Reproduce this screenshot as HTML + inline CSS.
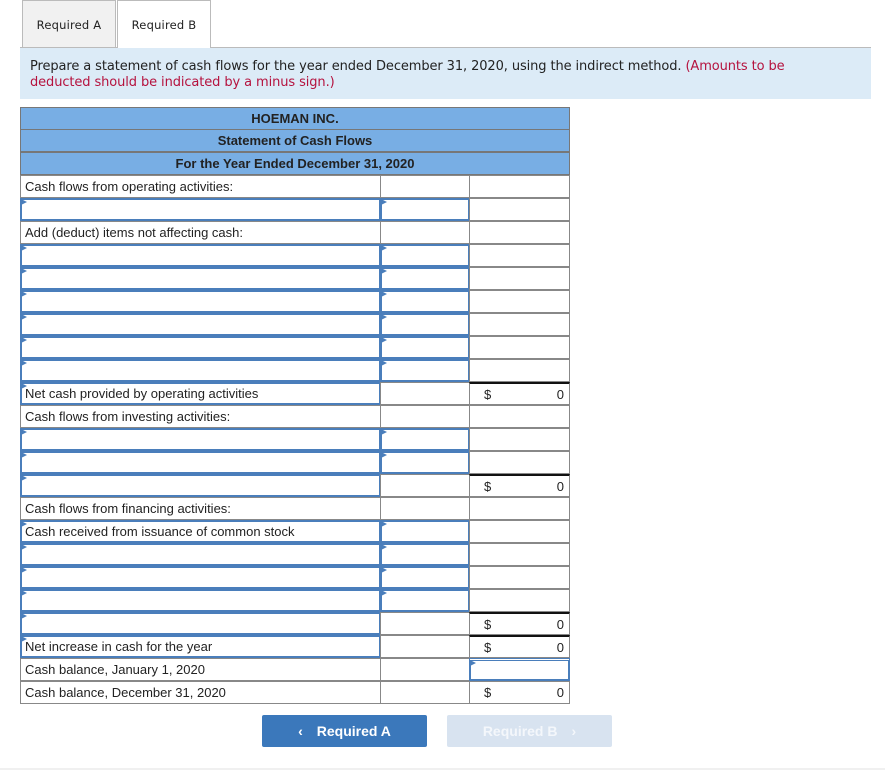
<!DOCTYPE html>
<html><head><style>
body{margin:0;width:885px;height:777px;background:#fff;position:relative;font-family:"Liberation Sans",Arial,sans-serif;overflow:hidden}
.tab{position:absolute;top:0;height:46px;width:92px;border:1px solid #bbb;border-bottom:none;font-family:"DejaVu Sans",Verdana,sans-serif;font-size:11.5px;line-height:48px;text-align:center;color:#222;letter-spacing:0.2px}
.banner{position:absolute;left:20px;top:47px;width:851px;height:52px;background:#dcebf7;border-top:1px solid #bbb;box-sizing:border-box;font-family:"DejaVu Sans",Verdana,sans-serif;font-size:13px;color:#222;padding:11px 60px 0 10px;line-height:16px;letter-spacing:-0.1px}
.red{color:#b5123e}
.hdr{position:absolute;left:20px;width:550px;height:23px;background:#78aee4;border:1px solid #777;box-sizing:border-box;text-align:center;font-size:13px;line-height:21px;font-weight:bold;color:#222}
.c{position:absolute;height:23px;box-sizing:border-box;border:1px solid #888;font-size:13px;line-height:21px;color:#222;padding-left:4px;white-space:nowrap}
.in{border:2px solid #4a7ebb;line-height:19px;padding-left:3px}
.in::before{content:"";position:absolute;left:-1px;top:-1px;border-left:6px solid #4a7ebb;border-top:3px solid transparent;border-bottom:3px solid transparent}
.t{border-top:2px solid #111}
.d{position:absolute;left:14px}
.z{position:absolute;right:5px}
.btn{position:absolute;top:715px;width:165px;height:32px;border-radius:2px;color:#fff;font-weight:bold;font-size:14px;line-height:32px;text-align:center}
</style></head><body>
<div class="tab" style="left:22px;background:#f1f1f1">Required A</div>
<div class="tab" style="left:117px;background:#fff;z-index:2;height:47px">Required B</div>
<div class="banner">Prepare a statement of cash flows for the year ended December 31, 2020, using the indirect method. <span class="red">(Amounts to be deducted should be indicated by a minus sign.)</span></div>
<div class="hdr" style="top:107px">HOEMAN INC.</div>
<div class="hdr" style="top:129px">Statement of Cash Flows</div>
<div class="hdr" style="top:152px">For the Year Ended December 31, 2020</div>

<div style="position:absolute;left:0;top:0">
<div class="c" style="left:20px;top:175px;width:361px">Cash flows from operating activities:</div><div class="c" style="left:380px;top:175px;width:90px"></div><div class="c" style="left:469px;top:175px;width:101px"></div>
<div class="c in" style="left:20px;top:198px;width:361px"></div><div class="c in" style="left:380px;top:198px;width:90px"></div><div class="c" style="left:469px;top:198px;width:101px"></div>
<div class="c" style="left:20px;top:221px;width:361px">Add (deduct) items not affecting cash:</div><div class="c" style="left:380px;top:221px;width:90px"></div><div class="c" style="left:469px;top:221px;width:101px"></div>
<div class="c in" style="left:20px;top:244px;width:361px"></div><div class="c in" style="left:380px;top:244px;width:90px"></div><div class="c" style="left:469px;top:244px;width:101px"></div>
<div class="c in" style="left:20px;top:267px;width:361px"></div><div class="c in" style="left:380px;top:267px;width:90px"></div><div class="c" style="left:469px;top:267px;width:101px"></div>
<div class="c in" style="left:20px;top:290px;width:361px"></div><div class="c in" style="left:380px;top:290px;width:90px"></div><div class="c" style="left:469px;top:290px;width:101px"></div>
<div class="c in" style="left:20px;top:313px;width:361px"></div><div class="c in" style="left:380px;top:313px;width:90px"></div><div class="c" style="left:469px;top:313px;width:101px"></div>
<div class="c in" style="left:20px;top:336px;width:361px"></div><div class="c in" style="left:380px;top:336px;width:90px"></div><div class="c" style="left:469px;top:336px;width:101px"></div>
<div class="c in" style="left:20px;top:359px;width:361px"></div><div class="c in" style="left:380px;top:359px;width:90px"></div><div class="c" style="left:469px;top:359px;width:101px"></div>
<div class="c in" style="left:20px;top:382px;width:361px">Net cash provided by operating activities</div><div class="c" style="left:380px;top:382px;width:90px"></div><div class="c t" style="left:469px;top:382px;width:101px"><span class="d">$</span><span class="z">0</span></div>
<div class="c" style="left:20px;top:405px;width:361px">Cash flows from investing activities:</div><div class="c" style="left:380px;top:405px;width:90px"></div><div class="c" style="left:469px;top:405px;width:101px"></div>
<div class="c in" style="left:20px;top:428px;width:361px"></div><div class="c in" style="left:380px;top:428px;width:90px"></div><div class="c" style="left:469px;top:428px;width:101px"></div>
<div class="c in" style="left:20px;top:451px;width:361px"></div><div class="c in" style="left:380px;top:451px;width:90px"></div><div class="c" style="left:469px;top:451px;width:101px"></div>
<div class="c in" style="left:20px;top:474px;width:361px"></div><div class="c" style="left:380px;top:474px;width:90px"></div><div class="c t" style="left:469px;top:474px;width:101px"><span class="d">$</span><span class="z">0</span></div>
<div class="c" style="left:20px;top:497px;width:361px">Cash flows from financing activities:</div><div class="c" style="left:380px;top:497px;width:90px"></div><div class="c" style="left:469px;top:497px;width:101px"></div>
<div class="c in" style="left:20px;top:520px;width:361px">Cash received from issuance of common stock</div><div class="c in" style="left:380px;top:520px;width:90px"></div><div class="c" style="left:469px;top:520px;width:101px"></div>
<div class="c in" style="left:20px;top:543px;width:361px"></div><div class="c in" style="left:380px;top:543px;width:90px"></div><div class="c" style="left:469px;top:543px;width:101px"></div>
<div class="c in" style="left:20px;top:566px;width:361px"></div><div class="c in" style="left:380px;top:566px;width:90px"></div><div class="c" style="left:469px;top:566px;width:101px"></div>
<div class="c in" style="left:20px;top:589px;width:361px"></div><div class="c in" style="left:380px;top:589px;width:90px"></div><div class="c" style="left:469px;top:589px;width:101px"></div>
<div class="c in" style="left:20px;top:612px;width:361px"></div><div class="c" style="left:380px;top:612px;width:90px"></div><div class="c t" style="left:469px;top:612px;width:101px"><span class="d">$</span><span class="z">0</span></div>
<div class="c in" style="left:20px;top:635px;width:361px">Net increase in cash for the year</div><div class="c" style="left:380px;top:635px;width:90px"></div><div class="c t" style="left:469px;top:635px;width:101px"><span class="d">$</span><span class="z">0</span></div>
<div class="c" style="left:20px;top:658px;width:361px">Cash balance, January 1, 2020</div><div class="c" style="left:380px;top:658px;width:90px"></div><div class="c in" style="left:469px;top:658px;width:101px;border-top:3px double #4a7ebb"></div>
<div class="c" style="left:20px;top:681px;width:361px">Cash balance, December 31, 2020</div><div class="c" style="left:380px;top:681px;width:90px"></div><div class="c" style="left:469px;top:681px;width:101px"><span class="d">$</span><span class="z">0</span></div>
</div>

<div class="btn" style="left:262px;background:#3b78bb"><span style="margin-right:14px">&#8249;</span>Required A</div>
<div class="btn" style="left:447px;background:#d8e3f0;color:#f4f7fb">Required B<span style="margin-left:14px">&#8250;</span></div>
<div style="position:absolute;left:0;top:768px;width:885px;height:2px;background:#f0f0f0"></div>
</body></html>
